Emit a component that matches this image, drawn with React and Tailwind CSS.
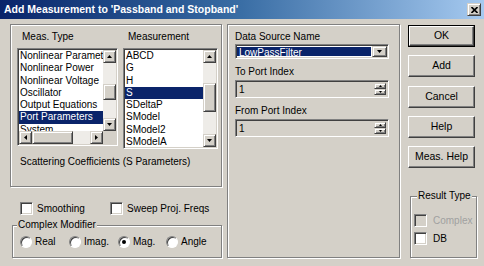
import React from 'react';

// classic win9x bevels
const raised =
  'border border-t-white border-l-white border-b-[#404040] border-r-[#404040] shadow-[inset_-1px_-1px_0_#808080]';
const sbRaised =
  'border border-t-[#d4d0c8] border-l-[#d4d0c8] border-b-[#404040] border-r-[#404040] shadow-[inset_1px_1px_0_#fff,inset_-1px_-1px_0_#808080]';
const sunken =
  'border border-t-[#808080] border-l-[#808080] border-b-white border-r-white shadow-[inset_1px_1px_0_#404040,inset_-1px_-1px_0_#d4d0c8]';
const etched = 'border border-[#808080] shadow-[inset_1px_1px_0_#fff,1px_1px_0_#fff]';

function Arrow({ dir }) {
  if (dir === 'up') return <svg width="5" height="3" viewBox="0 0 5 3"><polygon points="0,3 2.5,0 5,3" fill="#000" /></svg>;
  if (dir === 'down') return <svg width="5" height="3" viewBox="0 0 5 3"><polygon points="0,0 5,0 2.5,3" fill="#000" /></svg>;
  if (dir === 'left') return <svg width="3" height="5" viewBox="0 0 3 5"><polygon points="3,0 3,5 0,2.5" fill="#000" /></svg>;
  return <svg width="3" height="5" viewBox="0 0 3 5"><polygon points="0,0 0,5 3,2.5" fill="#000" /></svg>;
}

function ScrollBtn({ dir }) {
  return (
    <div className={`w-[13px] h-[13px] shrink-0 flex items-center justify-center bg-[#d4d0c8] ${sbRaised}`}>
      <Arrow dir={dir} />
    </div>
  );
}

function VScroll({ pre, thumb, corner }) {
  return (
    <div className="w-[13px] shrink-0 flex flex-col">
      <ScrollBtn dir="up" />
      <div className="flex-1 flex flex-col bg-[#eeece8]">
        <div className={pre} />
        <div className={`${thumb} bg-[#d4d0c8] ${sbRaised}`} />
      </div>
      <ScrollBtn dir="down" />
      {corner && <div className="h-[13px] bg-[#d4d0c8]" />}
    </div>
  );
}

function Rows({ items, selected }) {
  return (
    <div className="flex flex-col">
      {items.map((t) => (
        <div
          key={t}
          className={`h-[12.3px] leading-[12.3px] pl-[1px] whitespace-nowrap text-[10px] ${
            t === selected ? 'bg-[#0a246a] text-white' : 'text-black'
          }`}
        >
          {t}
        </div>
      ))}
    </div>
  );
}

function Check({ disabled }) {
  return <div className={`w-[13px] h-[13px] shrink-0 ${sunken} ${disabled ? 'bg-[#d4d0c8]' : 'bg-white'}`} />;
}

function Radio({ on, label }) {
  return (
    <div className="flex items-center gap-[3px]">
      <div className="w-[12px] h-[12px] rounded-full bg-white flex items-center justify-center border border-t-[#808080] border-l-[#808080] border-b-white border-r-white shadow-[inset_1px_1px_0_#404040]">
        {on && <div className="w-[4px] h-[4px] rounded-full bg-black" />}
      </div>
      <span className="text-[10px] leading-[12px]">{label}</span>
    </div>
  );
}

function Btn({ children, def, className = '' }) {
  const inner = (
    <div className={`w-full h-full flex items-center justify-center text-[10.5px] ${raised}`}>{children}</div>
  );
  return (
    <div className={`w-[67px] h-[22px] ${def ? 'border border-black' : ''} ${className}`}>{inner}</div>
  );
}

function Spinner() {
  return (
    <div className="w-[12px] flex flex-col">
      <div className={`flex-1 flex items-center justify-center bg-[#d4d0c8] ${sbRaised}`}>
        <svg width="3" height="2" viewBox="0 0 3 2"><polygon points="0,2 1.5,0 3,2" fill="#000" /></svg>
      </div>
      <div className={`flex-1 flex items-center justify-center bg-[#d4d0c8] ${sbRaised}`}>
        <svg width="3" height="2" viewBox="0 0 3 2"><polygon points="0,0 3,0 1.5,2" fill="#000" /></svg>
      </div>
    </div>
  );
}

function SpinBox({ value }) {
  return (
    <div className={`w-[154px] h-[18px] flex bg-[#d4d0c8] p-[2px] ${sunken}`}>
      <div className="flex-1 pl-[1px] text-[10px] leading-[14px]">{value}</div>
      <Spinner />
    </div>
  );
}

export default function App() {
  const types = [
    'Nonlinear Parameters',
    'Nonlinear Power',
    'Nonlinear Voltage',
    'Oscillator',
    'Output Equations',
    'Port Parameters',
    'System',
  ];
  const meas = ['ABCD', 'G', 'H', 'S', 'SDeltaP', 'SModel', 'SModel2', 'SModelA'];

  return (
    <div className="w-[484px] h-[266px] bg-[#d4d0c8] overflow-hidden flex flex-col font-['Liberation_Sans',Arial,sans-serif] text-black">
      {/* title bar */}
      <div className="h-[19px] shrink-0 flex items-center justify-between pl-[4px] pr-[3px] bg-gradient-to-r from-[#0a246a] via-[#3a6ea5] to-[#a6caf0]">
        <span className="text-white font-bold text-[10.5px] leading-[19px] whitespace-nowrap">
          Add Measurement to 'Passband and Stopband'
        </span>
        <div className={`w-[14px] h-[13px] flex items-center justify-center bg-[#d4d0c8] ${sbRaised}`}>
          <svg width="7" height="6" viewBox="0 0 7 6">
            <path d="M0.5 0 L6.5 6 M6.5 0 L0.5 6" stroke="#000" strokeWidth="1.6" />
          </svg>
        </div>
      </div>

      <div className="flex pt-[5px] pl-[10px]">
        {/* left column */}
        <div className="w-[212px] flex flex-col">
          <div className={`h-[163px] ${etched}`}>
            <div className="flex pt-[6px] h-[18px] text-[10px] leading-[12px]">
              <span className="pl-[11px] w-[117px]">Meas. Type</span>
              <span>Measurement</span>
            </div>
            <div className="flex items-start gap-[5px] pl-[6px] mt-[5px]">
              {/* listbox 1 */}
              <div className={`w-[101px] h-[98px] bg-white p-[1px] flex ${sunken}`}>
                <div className="flex-1 flex flex-col min-w-0">
                  <div className="flex-1 overflow-hidden">
                    <Rows items={types} selected="Port Parameters" />
                  </div>
                  <div className="h-[13px] flex">
                    <ScrollBtn dir="left" />
                    <div className={`w-[41px] bg-[#d4d0c8] ${sbRaised}`} />
                    <div className="flex-1 bg-[#eeece8]" />
                    <ScrollBtn dir="right" />
                  </div>
                </div>
                <VScroll pre="h-[21px]" thumb="h-[16px]" corner />
              </div>
              {/* listbox 2 */}
              <div className={`w-[95px] h-[101px] bg-white p-[1px] flex ${sunken}`}>
                <div className="flex-1 overflow-hidden min-w-0">
                  <Rows items={meas} selected="S" />
                </div>
                <VScroll pre="h-[20px]" thumb="h-[29px]" />
              </div>
            </div>
            <div className="pl-[9px] mt-[7px] text-[10px] leading-[12px]">
              Scattering Coefficients (S Parameters)
            </div>
          </div>

          <div className="flex items-center mt-[15px] pl-[10px] text-[10px] leading-[13px]">
            <Check />
            <span className="ml-[4px] w-[73px]">Smoothing</span>
            <Check />
            <span className="ml-[4px]">Sweep Proj. Freqs</span>
          </div>

          <div className={`relative ml-[2px] mt-[10px] w-[210px] h-[33px] ${etched}`}>
            <span className="absolute left-[4px] -top-[7px] px-[1px] bg-[#d4d0c8] text-[10px] leading-[12px]">
              Complex Modifier
            </span>
            <div className="grid grid-cols-[49px_49px_48px_auto] pl-[7px] pt-[10px]">
              <Radio label="Real" />
              <Radio label="Imag." />
              <Radio on label="Mag." />
              <Radio label="Angle" />
            </div>
          </div>
        </div>

        {/* middle panel */}
        <div className={`ml-[5px] w-[173px] h-[234px] pl-[7px] ${etched}`}>
          <div className="pt-[6px] text-[10px] leading-[12px]">Data Source Name</div>
          <div className={`mt-[1px] w-[154px] h-[15px] bg-white flex px-[1px] py-[2px] ${sunken}`}>
            <div className="flex-1 bg-[#0a246a] text-white text-[10px] leading-[11px] pl-[2px] mr-[1px]">
              LowPassFilter
            </div>
            <div className={`w-[15px] -my-[1px] flex items-center justify-center bg-[#d4d0c8] ${sbRaised}`}>
              <Arrow dir="down" />
            </div>
          </div>
          <div className="mt-[7px] text-[10px] leading-[12px]">To Port Index</div>
          <div className="mt-[2px]">
            <SpinBox value="1" />
          </div>
          <div className="mt-[7px] text-[10px] leading-[12px]">From Port Index</div>
          <div className="mt-[2px]">
            <SpinBox value="1" />
          </div>
        </div>

        {/* right column */}
        <div className="ml-[8px] flex flex-col">
          <Btn def className="mt-[1px]">OK</Btn>
          <Btn className="mt-[8px]">Add</Btn>
          <Btn className="mt-[9px]">Cancel</Btn>
          <Btn className="mt-[8px]">Help</Btn>
          <Btn className="mt-[8px]">Meas. Help</Btn>
          <div className={`relative ml-[2px] mt-[28px] w-[67px] h-[62px] ${etched}`}>
            <span className="absolute left-[6px] -top-[7px] px-[1px] bg-[#d4d0c8] text-[10px] leading-[12px]">
              Result Type
            </span>
            <div className="flex flex-col gap-[5px] pl-[3px] pt-[17px] text-[10px] leading-[13px]">
              <div className="flex items-center">
                <Check disabled />
                <span className="ml-[6px] text-[#a0a0a0]">Complex</span>
              </div>
              <div className="flex items-center">
                <Check />
                <span className="ml-[6px]">DB</span>
              </div>
            </div>
          </div>
        </div>
      </div>
    </div>
  );
}
